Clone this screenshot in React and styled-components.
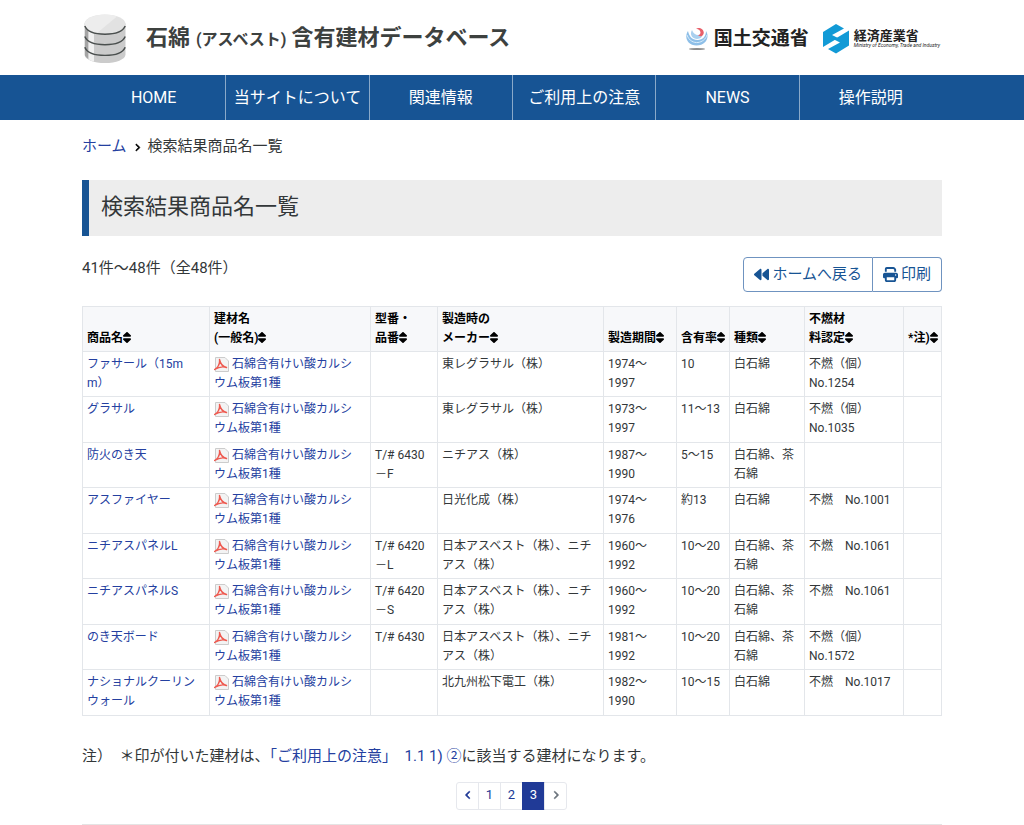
import { Fragment } from "react"
import styled, { createGlobalStyle } from "styled-components"
import { FaAngleLeft, FaAngleRight, FaBackward, FaPrint, FaSort } from "react-icons/fa6"

const menu = ["HOME", "当サイトについて", "関連情報", "ご利用上の注意", "NEWS", "操作説明"]

const colunas = [
  { largura: 127, titulo: "商品名" },
  { largura: 161, titulo: "建材名\n(一般名)" },
  { largura: 67, titulo: "型番・\n品番" },
  { largura: 166, titulo: "製造時の\nメーカー" },
  { largura: 73, titulo: "製造期間" },
  { largura: 53, titulo: "含有率" },
  { largura: 75, titulo: "種類" },
  { largura: 99, titulo: "不燃材\n料認定" },
  { largura: 38, titulo: "*注)" },
]

const material = ["石綿含有けい酸カルシ", "ウム板第1種"]

const produtos = [
  ["ファサール（15m\nm）", "", "東レグラサル（株）", "1974～\n1997", "10", "白石綿", "不燃（個）\nNo.1254"],
  ["グラサル", "", "東レグラサル（株）", "1973～\n1997", "11～13", "白石綿", "不燃（個）\nNo.1035"],
  ["防火のき天", "T/# 6430\n－F", "ニチアス（株）", "1987～\n1990", "5～15", "白石綿、茶\n石綿", ""],
  ["アスファイヤー", "", "日光化成（株）", "1974～\n1976", "約13", "白石綿", "不燃　No.1001"],
  ["ニチアスパネルL", "T/# 6420\n－L", "日本アスベスト（株）、ニチ\nアス（株）", "1960～\n1992", "10～20", "白石綿、茶\n石綿", "不燃　No.1061"],
  ["ニチアスパネルS", "T/# 6420\n－S", "日本アスベスト（株）、ニチ\nアス（株）", "1960～\n1992", "10～20", "白石綿、茶\n石綿", "不燃　No.1061"],
  ["のき天ボード", "T/# 6430", "日本アスベスト（株）、ニチ\nアス（株）", "1981～\n1992", "10～20", "白石綿、茶\n石綿", "不燃（個）\nNo.1572"],
  ["ナショナルクーリン\nウォール", "", "北九州松下電工（株）", "1982～\n1990", "10～15", "白石綿", "不燃　No.1017"],
]

export default function App() {
  return (
    <>
      <GlobalStyle />
      <Topo>
        <Marca href="#">
          <IconeBanco />
          <NomeSite>
            石綿<small>(アスベスト)</small>含有建材データベース
          </NomeSite>
        </Marca>
        <Ministerios>
          <Ministerio href="#">
            <IconeMlit />
            <NomeMlit>国土交通省</NomeMlit>
          </Ministerio>
          <Ministerio href="#">
            <IconeMeti />
            <NomeMeti>
              経済産業省
              <small>Ministry of Economy, Trade and Industry</small>
            </NomeMeti>
          </Ministerio>
        </Ministerios>
      </Topo>

      <Navegacao>
        <Menu>
          {menu.map((item) => (
            <li key={item}><a href="#">{item}</a></li>
          ))}
        </Menu>
      </Navegacao>

      <Conteudo>
        <Caminho aria-label="breadcrumb">
          <a href="#">ホーム</a>
          <FaAngleRight />
          <span>検索結果商品名一覧</span>
        </Caminho>
        <Titulo>検索結果商品名一覧</Titulo>

        <BarraResultado>
          <span>41件～48件（全48件）</span>
          <GrupoBotoes>
            <Botao><FaBackward />ホームへ戻る</Botao>
            <Botao><FaPrint />印刷</Botao>
          </GrupoBotoes>
        </BarraResultado>

        <Tabela>
          <colgroup>
            {colunas.map(({ titulo, largura }) => <col key={titulo} width={largura} />)}
          </colgroup>
          <thead>
            <tr>
              {colunas.map(({ titulo }) => (
                <th key={titulo} scope="col">{titulo}<FaSort /></th>
              ))}
            </tr>
          </thead>
          <tbody>
            {produtos.map(([nome, ...dados]) => (
              <tr key={nome}>
                <td><a href="#">{nome}</a></td>
                <td>
                  <a href="#">
                    <IconePdf />
                    {material.map((linha, i) => (
                      <Fragment key={linha}>{i > 0 && <br />}{linha}</Fragment>
                    ))}
                  </a>
                </td>
                {dados.map((dado, i) => <td key={i}>{dado}</td>)}
                <td></td>
              </tr>
            ))}
          </tbody>
        </Tabela>

        <Nota>
          注）　＊印が付いた建材は、<a href="#">「ご利用上の注意」　1.1 1) ②</a>に該当する建材になります。
        </Nota>

        <Paginacao aria-label="pagination">
          <Pagina href="#" aria-label="previous"><FaAngleLeft /></Pagina>
          <Pagina href="#">1</Pagina>
          <Pagina href="#">2</Pagina>
          <Pagina href="#" $ativa aria-current="page">3</Pagina>
          <Pagina href="#" $inativa aria-label="next"><FaAngleRight /></Pagina>
        </Paginacao>
        <Linha />
      </Conteudo>
    </>
  )
}

function IconeBanco() {
  return (
    <svg width="42" height="50" viewBox="0 0 42 52" preserveAspectRatio="none" aria-hidden="true">
      <path d="M0.500 10V42C0.500 47 10 51 21 51S41.500 47 41.500 42V10Z" fill="#cbcbcb" />
      <path d="M1 12V43C2 45 3 46 4.500 47V15Z" fill="#a5a5a5" />
      <path d="M4.500 14V47C6 48 8 49 10 49.500V17Z" fill="#f0f0f0" />
      <ellipse cx="21" cy="10.500" rx="20.500" ry="10" fill="#e2e2e2" />
      <path d="M13 19.800C5 18 0.500 14.500 0.500 10.500C0.500 5 10 0.500 21 0.500C26 0.500 30 1.300 33 2.500Z" fill="#ededed" />
      <g fill="none" stroke="#4a4f4e" strokeWidth="1.500">
        <path d="M0.800 12.500C3 18 11 21 21 21S39 18 41.200 12.500" />
        <path d="M0.800 23.500C3 29 11 32 21 32S39 29 41.200 23.500" />
        <path d="M0.800 34.500C3 40 11 43 21 43S39 40 41.200 34.500" />
      </g>
    </svg>
  )
}

function IconeMlit() {
  return (
    <svg width="24" height="24" viewBox="0 0 24 24" aria-hidden="true">
      <path d="M3 4C-1 10 2 18.500 11.500 18.500C21 18.500 25 10 21 4C21 9 18 13 12.500 13C7 13 4 9 3 4Z" fill="#8ebfe8" />
      <path d="M2 8C4 14 9 16 13 15.500C17 15 21 12 22 8" fill="none" stroke="#d9edfb" />
      <path d="M7 3C4 8 8 12 12 12C16 12 18 9 17 6C15 9 9 9 7 3Z" fill="#a9d0ef" />
      <path d="M11 1.500C15-0.500 20 3 18.500 7C17.500 10 14.500 9.500 13 8.500C17 7 16 2.500 11 1.500Z" fill="#e8606a" />
      <ellipse cx="12" cy="22" rx="8" ry="1" fill="#8d8d8d" />
    </svg>
  )
}

function IconeMeti() {
  return (
    <svg width="26" height="30" viewBox="0 0 26 30" aria-hidden="true">
      <path d="M0 8L13 0L21 4.500L9 11L15 14L0 23Z" fill="#129ad6" />
      <path d="M26 21.500L13 29.500L5 25L17 18.500L11 15.500L26 6.500Z" fill="#129ad6" />
    </svg>
  )
}

function IconePdf() {
  return (
    <svg width="15" height="15" viewBox="0 0 15 15" aria-hidden="true">
      <path d="M1.500 0.500H11L14.500 4V14.500H1.500Z" fill="#f3f3f3" stroke="#ccc" />
      <path d="M0.500 12.500C4 10.500 6 7 5.500 2.500C6.500 7 9 9.800 12.500 10.500C9 9.200 5 9.800 0.500 12.500Z" fill="none" stroke="#ee5a50" strokeWidth="1.400" strokeLinejoin="round" />
    </svg>
  )
}

const GlobalStyle = createGlobalStyle`
  * {
    box-sizing: border-box;
  }
  body {
    margin: 0;
    background: #fff;
    color: #333739;
    font-family: Roboto, "Noto Sans CJK JP", sans-serif;
    font-size: 15px;
    line-height: 22px;
  }
  a {
    color: #2440a0;
    text-decoration: none;
  }
`
const Topo = styled.header`
  display: flex;
  justify-content: space-between;
  align-items: center;
  max-width: 860px;
  height: 75px;
  margin: 0 auto;
  padding: 2px 2px 0;
`
const Marca = styled.a`
  display: flex;
  align-items: center;
  gap: 20px;
`
const NomeSite = styled.span`
  color: #3d413f;
  font-size: 22px;
  font-weight: 700;
  small {
    margin: 0 5px 0 6px;
    font-size: 16px;
  }
`
const Ministerios = styled.div`
  display: flex;
  align-items: center;
  gap: 14px;
`
const Ministerio = styled.a`
  display: flex;
  align-items: center;
  gap: 5px;
  color: #222;
`
const NomeMlit = styled.span`
  font-size: 19px;
  font-weight: 700;
`
const NomeMeti = styled.span`
  font-size: 13px;
  font-weight: 700;
  line-height: 14px;
  small {
    display: block;
    font-size: 5px;
    font-style: italic;
    font-weight: 400;
    line-height: 5px;
  }
`
const Navegacao = styled.nav`
  background: #175494;
`
const Menu = styled.ul`
  display: grid;
  grid-template-columns: repeat(6, 1fr);
  max-width: 860px;
  margin: 0 auto;
  padding: 0;
  list-style: none;
  li + li {
    border-left: 1px solid #8aa9c9;
  }
  a {
    display: block;
    color: #fff;
    font-size: 16px;
    line-height: 45px;
    text-align: center;
    white-space: nowrap;
  }
`
const Conteudo = styled.main`
  max-width: 860px;
  margin: 0 auto;
`
const Caminho = styled.nav`
  display: flex;
  align-items: center;
  gap: 6px;
  padding: 15px 0 23px;
  svg {
    width: 9px;
    height: 9px;
    margin-top: 3px;
    color: #000;
    stroke: #000;
    stroke-width: 40px;
  }
`
const Titulo = styled.h1`
  margin: 0 0 21px;
  padding: 11px 12px 13px;
  border-left: 7px solid #175494;
  background: #ededed;
  font-size: 22px;
  font-weight: 400;
  line-height: 32px;
`
const BarraResultado = styled.div`
  display: flex;
  justify-content: space-between;
  align-items: flex-start;
  margin-bottom: 14px;
`
const GrupoBotoes = styled.div`
  display: flex;
`
const Botao = styled.button`
  display: flex;
  align-items: center;
  gap: 3px;
  height: 35px;
  padding: 0 10px 1px;
  border: 1px solid #6f93c0;
  background: #fff;
  color: #175494;
  font: inherit;
  cursor: pointer;
  &:first-child {
    border-radius: 4px 0 0 4px;
  }
  &:last-child {
    border-left: none;
    border-radius: 0 4px 4px 0;
  }
`
const Tabela = styled.table`
  width: 100%;
  table-layout: fixed;
  border-collapse: collapse;
  font-size: 12px;
  line-height: 19px;
  white-space: pre-line;
  th, td {
    padding: 3px 0 3px 4px;
    border: 1px solid #e3e6ea;
    text-align: left;
    vertical-align: top;
  }
  th {
    background: #f7f8fa;
    color: #000;
    vertical-align: bottom;
    white-space: pre;
  }
  th svg {
    width: 8px;
    height: 13px;
    vertical-align: -2px;
  }
  tbody tr:nth-child(even) td {
    padding-bottom: 4px;
  }
  td svg {
    margin-right: 3px;
    vertical-align: -4px;
  }
`
const Nota = styled.p`
  margin: 29px 0 15px;
`
const Paginacao = styled.nav`
  display: flex;
  justify-content: center;
  font-size: 13px;
`
const Pagina = styled.a`
  display: flex;
  align-items: center;
  justify-content: center;
  width: 23px;
  height: 28px;
  margin-left: -1px;
  padding-bottom: 2px;
  border: 1px solid ${props => props.$ativa ? "#203a97" : "#e6e8ed"};
  background: ${props => props.$ativa ? "#203a97" : "#fff"};
  color: ${props => props.$ativa ? "#fff" : props.$inativa ? "#6c757d" : "#203a97"};
  &:first-child {
    border-radius: 3px 0 0 3px;
  }
  &:last-child {
    border-radius: 0 3px 3px 0;
  }
  svg {
    width: 10px;
    height: 10px;
    stroke: currentColor;
    stroke-width: 30px;
  }
`
const Linha = styled.hr`
  margin: 14px 0 0;
  border: none;
  border-top: 1px solid #e4e4e4;
`
